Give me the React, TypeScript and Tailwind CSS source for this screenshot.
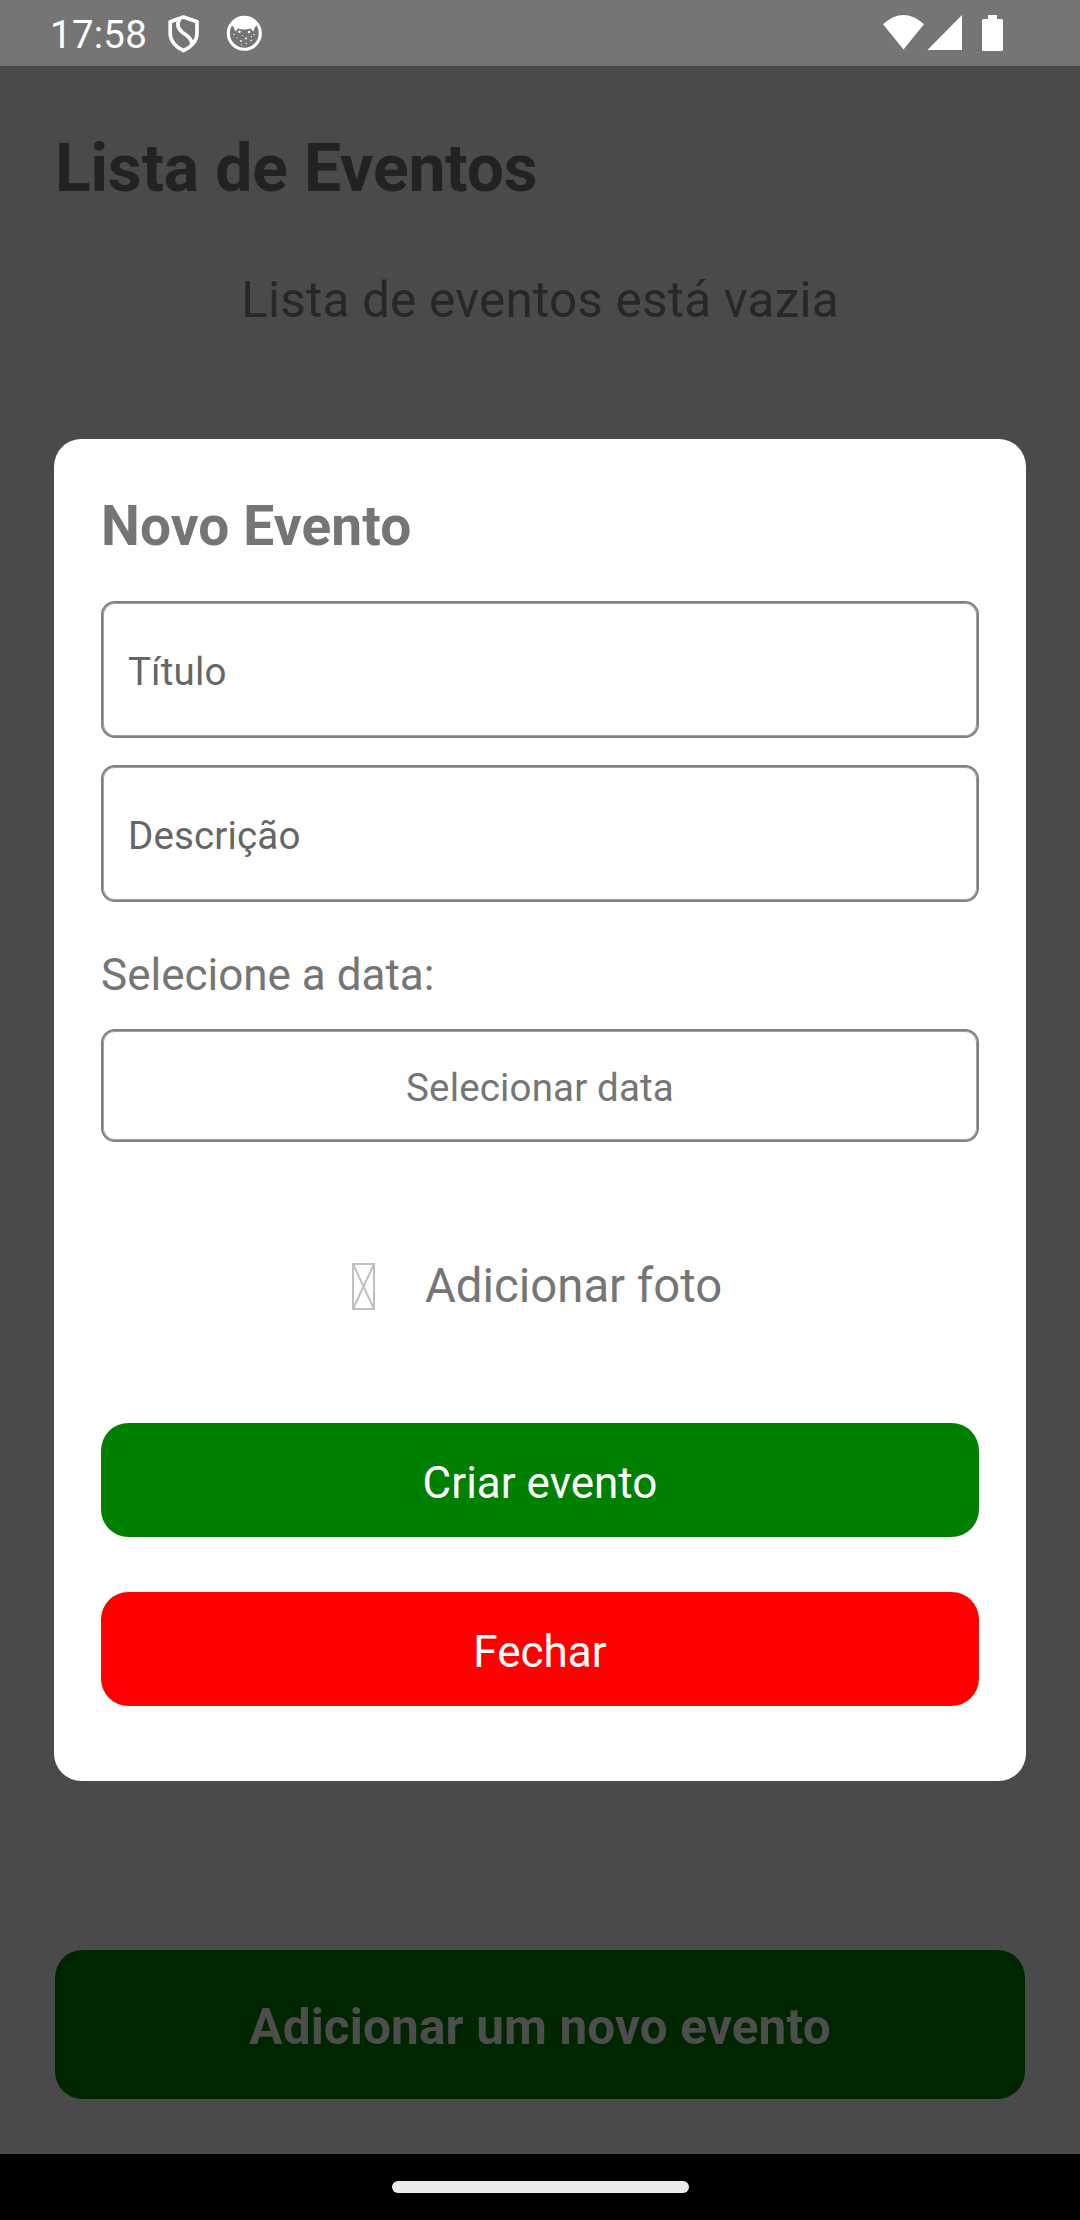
import React from "react";

function ShieldIcon() {
  return (
    <svg className="ml-[22px] h-[38px] w-[32px]" viewBox="0 0 32 38" fill="none" stroke="#fff" strokeWidth="3.7" strokeLinejoin="round">
      <path d="M15.500 2 L29 6.800 V18 C29 26 23 32.500 15.500 35.600 C8 32.500 2.200 26 2.200 18 V6.800 Z" />
      <path d="M11.500 4.200 C8.500 9.500 10 14 14.500 17.500 C19.500 21 23.500 23 24 29.500" />
    </svg>
  );
}

function CatIcon() {
  return (
    <svg className="ml-[26px] h-[36px] w-[36px]" viewBox="0 0 36 36">
      <circle cx="18.300" cy="18.300" r="16" fill="none" stroke="#fff" strokeWidth="3.100" />
      <path d="M4 9 Q18 -6 32 9 L29 12 L27.300 16.500 L24.500 13.500 Q18 15.500 12 13.500 L9.500 16.500 L7.500 12 Z" fill="#fff" />
      <g fill="#fff">
        <circle cx="13.500" cy="16.800" r="1.200" />
        <circle cx="23" cy="17" r="1.200" />
        <circle cx="20" cy="23.500" r="1" />
        <circle cx="15" cy="26" r="0.900" />
        <circle cx="20" cy="28.500" r="0.700" />
        <circle cx="25" cy="25.500" r="0.800" />
        <circle cx="8" cy="19.500" r="0.700" />
        <circle cx="28" cy="19.500" r="0.700" />
        <circle cx="11" cy="23" r="0.600" />
        <circle cx="16.500" cy="20.500" r="0.600" />
        <circle cx="25.500" cy="21.500" r="0.600" />
        <circle cx="15.500" cy="29.800" r="0.600" />
      </g>
    </svg>
  );
}

function StatusBar() {
  return (
    <header className="flex h-[66px] shrink-0 items-start bg-[#757575] pl-[50px] text-white">
      <span className="mt-[12px] w-[96px] whitespace-nowrap text-[38.5px] leading-[45px] tracking-[0.25px]">17:58</span>
      <div className="flex pt-[15px]">
        <ShieldIcon />
        <CatIcon />
      </div>
      <svg className="ml-auto mt-[15px] mr-[77px] h-[37px] w-[120px]" viewBox="0 0 120 37" fill="#fff">
        <path d="M0 9.200 Q20.500 -9.200 41 9.200 L20.500 34.500 Z" />
        <path d="M79 0 V35 H44.500 Z" />
        <path d="M105 0 H114 V4 H118.500 Q120 4 120 5.500 V34.500 Q120 36 118.500 36 H100.500 Q99 36 99 34.500 V5.500 Q99 4 100.500 4 H105 Z" />
      </svg>
    </header>
  );
}

function Field({ label }: { label: string }) {
  return (
    <div className="flex h-[137px] items-center rounded-[14px] border-2 border-[#808080] px-[25px] pt-[4px] text-[38.5px] leading-[45px] tracking-[0.15px] text-[#666] shadow-[inset_0_0_0_1px_#a0a0a0]">
      {label}
    </div>
  );
}

function NewEventDialog() {
  return (
    <section className="absolute left-[54px] top-[439px] flex h-[1342px] w-[972px] flex-col rounded-[27.500px] bg-white px-[47px] text-[#757575]">
      <h2 className="mt-[55px] text-[55px] font-bold leading-[64px] tracking-[0.15px]">Novo Evento</h2>
      <div className="mt-[43px] flex flex-col gap-[27px]">
        <Field label="Título" />
        <Field label="Descrição" />
      </div>
      <p className="mt-[47px] text-[44px] leading-[52px]">Selecione a data:</p>
      <button className="mt-[28px] flex h-[113px] items-center justify-center rounded-[14px] border-2 border-[#808080] pt-[4px] text-[38.5px] leading-[45px] tracking-[0.15px] shadow-[inset_0_0_0_1px_#a0a0a0]">
        Selecionar data
      </button>
      <button className="mt-[110px] flex h-[68px] items-center pl-[251px]">
        <svg className="h-[47px] w-[23px]" viewBox="0 0 23 47" fill="none" stroke="#c0c0c0" strokeWidth="2">
          <path d="M1 1 H22 V46 H1 Z M1 1 L22 46 M22 1 L1 46" />
        </svg>
        <span className="ml-[50px] whitespace-nowrap text-[47.3px] leading-[56px]">Adicionar foto</span>
      </button>
      <button className="mt-[103px] flex h-[114px] items-center justify-center rounded-[27.500px] bg-[#008000] pt-[5px] text-[44px] leading-[52px] text-white">
        Criar evento
      </button>
      <button className="mt-[55px] flex h-[114px] items-center justify-center rounded-[27.500px] bg-[#ff0000] pt-[5px] text-[44px] leading-[52px] text-white">
        Fechar
      </button>
    </section>
  );
}

export default function App() {
  return (
    <div className="relative flex h-[2220px] w-[1080px] flex-col overflow-hidden bg-[#4a4a4a] font-['Roboto',sans-serif]">
      <StatusBar />
      <main className="flex flex-1 flex-col px-[55px]">
        <h1 className="mt-[64px] text-[66px] font-bold leading-[78px] tracking-[-0.15px] text-[#222]">Lista de Eventos</h1>
        <p className="mt-[63px] text-center text-[49.5px] leading-[58px] tracking-[0.2px] text-[#272727]">Lista de eventos está vazia</p>
        <button className="mb-[55px] mt-auto flex h-[149px] items-center justify-center rounded-[27.500px] bg-[#002600] pt-[5px] text-[49.5px] font-bold leading-[58px] tracking-[0.12px] text-[#4d4d4d]">
          Adicionar um novo evento
        </button>
      </main>
      <footer className="flex h-[66px] shrink-0 justify-center bg-black pt-[27px]">
        <div className="h-[12px] w-[297px] rounded-full bg-[#ebebeb]" />
      </footer>
      <NewEventDialog />
    </div>
  );
}
